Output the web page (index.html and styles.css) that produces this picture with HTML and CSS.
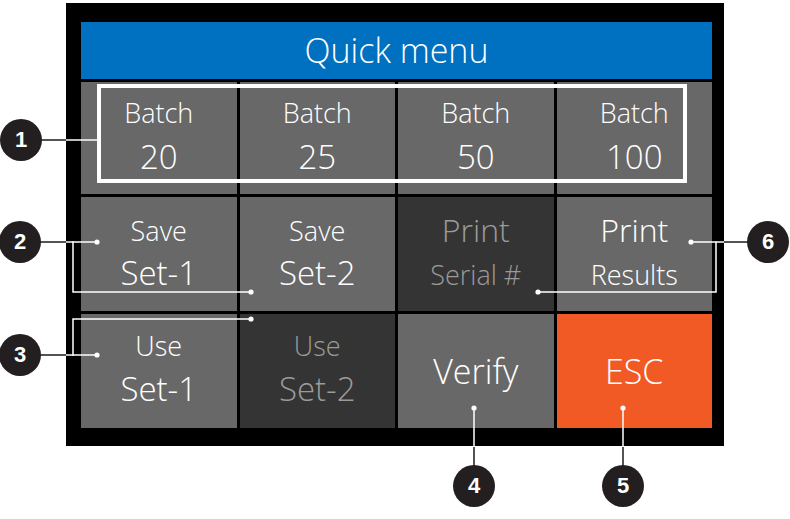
FILE: index.html
```html
<!DOCTYPE html>
<html>
<head>
<meta charset="utf-8">
<link rel="stylesheet" href="styles.css">
</head>
<body>
<div class="figure">
  <div class="panel">
    <div class="title">Quick menu</div>
    <div class="grid">
      <div class="cell row1"><span class="sm">Batch</span><span class="lg">20</span></div>
      <div class="cell row1"><span class="sm">Batch</span><span class="lg">25</span></div>
      <div class="cell row1"><span class="sm">Batch</span><span class="lg">50</span></div>
      <div class="cell row1"><span class="sm">Batch</span><span class="lg">100</span></div>

      <div class="cell row2"><span class="sm">Save</span><span class="lg">Set-1</span></div>
      <div class="cell row2"><span class="sm">Save</span><span class="lg">Set-2</span></div>
      <div class="cell row2 dark"><span class="lg2">Print</span><span class="sm2">Serial #</span></div>
      <div class="cell row2"><span class="lg2">Print</span><span class="sm2">Results</span></div>

      <div class="cell row3"><span class="sm">Use</span><span class="lg">Set-1</span></div>
      <div class="cell row3 dark"><span class="sm">Use</span><span class="lg">Set-2</span></div>
      <div class="cell single"><span class="xl">Verify</span></div>
      <div class="cell single esc"><span class="xl">ESC</span></div>
    </div>
  </div>

  <div class="batch-box"></div>

  <svg class="leaders" width="790" height="519" viewBox="0 0 790 519">
    <g stroke="#1a1a1a" stroke-width="1.5" fill="none">
      <line x1="40" y1="140" x2="66" y2="140"/>
      <line x1="40" y1="242" x2="66" y2="242"/>
      <line x1="40" y1="355" x2="66" y2="355"/>
      <line x1="474" y1="447" x2="474" y2="466"/>
      <line x1="623" y1="447" x2="623" y2="466"/>
      <line x1="724" y1="242" x2="748" y2="242"/>
    </g>
    <g stroke="#ffffff" stroke-width="1.5" fill="none">
      <line x1="66" y1="140" x2="97" y2="140"/>
      <polyline points="66,242 97,242"/>
      <polyline points="251,292 73,292 73,241.25"/>
      <polyline points="66,355 97,355"/>
      <polyline points="251,319 73,319 73,355.75"/>
      <line x1="474" y1="408" x2="474" y2="447"/>
      <line x1="623" y1="408" x2="623" y2="447"/>
      <polyline points="691,242 716,242 716,292 538,292"/>
      <line x1="716" y1="242" x2="724" y2="242"/>
    </g>
    <g fill="#ffffff">
      <circle cx="97" cy="242" r="2.6"/>
      <circle cx="251" cy="292" r="2.6"/>
      <circle cx="97" cy="355" r="2.6"/>
      <circle cx="251" cy="319" r="2.6"/>
      <circle cx="474" cy="408" r="2.6"/>
      <circle cx="623" cy="408" r="2.6"/>
      <circle cx="691" cy="242" r="2.6"/>
      <circle cx="538" cy="292" r="2.6"/>
    </g>
  </svg>

  <span class="badge b1">1</span>
  <span class="badge b2">2</span>
  <span class="badge b3">3</span>
  <span class="badge b4">4</span>
  <span class="badge b5">5</span>
  <span class="badge b6">6</span>
</div>
</body>
</html>
```

FILE: styles.css
```css
html, body {
  margin: 0;
  padding: 0;
  background: #ffffff;
}

.figure {
  position: relative;
  width: 790px;
  height: 519px;
  overflow: hidden;
  font-family: "Open Sans", "Noto Sans", sans-serif;
}

.panel {
  margin: 3px 0 0 66px;
  width: 658px;
  box-sizing: border-box;
  padding: 19px 12px 18px 15px;
  background: #000000;
}

.title {
  height: 57px;
  background: #0070c0;
  color: #ffffff;
  font-weight: 300;
  font-size: 34px;
  line-height: 56px;
  text-align: center;
}

.grid {
  margin-top: 3px;
  display: grid;
  grid-template-columns: repeat(4, 1fr);
  grid-template-rows: 112px 114px 114px;
  gap: 3px;
}

.cell {
  background: #686868;
  color: #ffffff;
  display: flex;
  flex-direction: column;
  align-items: center;
  justify-content: center;
  text-align: center;
  font-weight: 300;
  box-sizing: border-box;
}

.cell.row1 {
  padding-bottom: 6px;
}

.cell.row1 .sm {
  line-height: 44px;
}

.cell.row2 {
  padding-bottom: 2px;
}

.cell.row3 {
  padding-bottom: 6px;
}

.cell.row3 .sm {
  line-height: 42px;
}

.cell.dark {
  background: #343434;
  color: #9b9b9b;
}

.cell.esc {
  background: #f15a24;
}

.sm {
  font-size: 27px;
  line-height: 40px;
}

.lg {
  font-size: 33px;
  line-height: 44px;
}

.lg2 {
  font-size: 32px;
  line-height: 44px;
}

.sm2 {
  font-size: 27px;
  line-height: 46px;
}

.xl {
  font-size: 34px;
  line-height: 44px;
}

.batch-box {
  position: absolute;
  left: 97px;
  top: 84px;
  width: 590px;
  height: 99px;
  box-sizing: border-box;
  border: 4px solid #ffffff;
}

.leaders {
  position: absolute;
  left: 0;
  top: 0;
}

.badge {
  position: absolute;
  width: 42px;
  height: 42px;
  margin: -21px 0 0 -21px;
  border-radius: 50%;
  background: #231f20;
  color: #ffffff;
  font-family: "Liberation Sans", Arial, sans-serif;
  font-weight: bold;
  font-size: 22px;
  line-height: 42px;
  text-align: center;
}

.b1 { left: 21px; top: 140px; }
.b2 { left: 20px; top: 242px; }
.b3 { left: 20px; top: 355px; }
.b4 { left: 474px; top: 486px; }
.b5 { left: 623px; top: 486px; }
.b6 { left: 768px; top: 242px; }
```
